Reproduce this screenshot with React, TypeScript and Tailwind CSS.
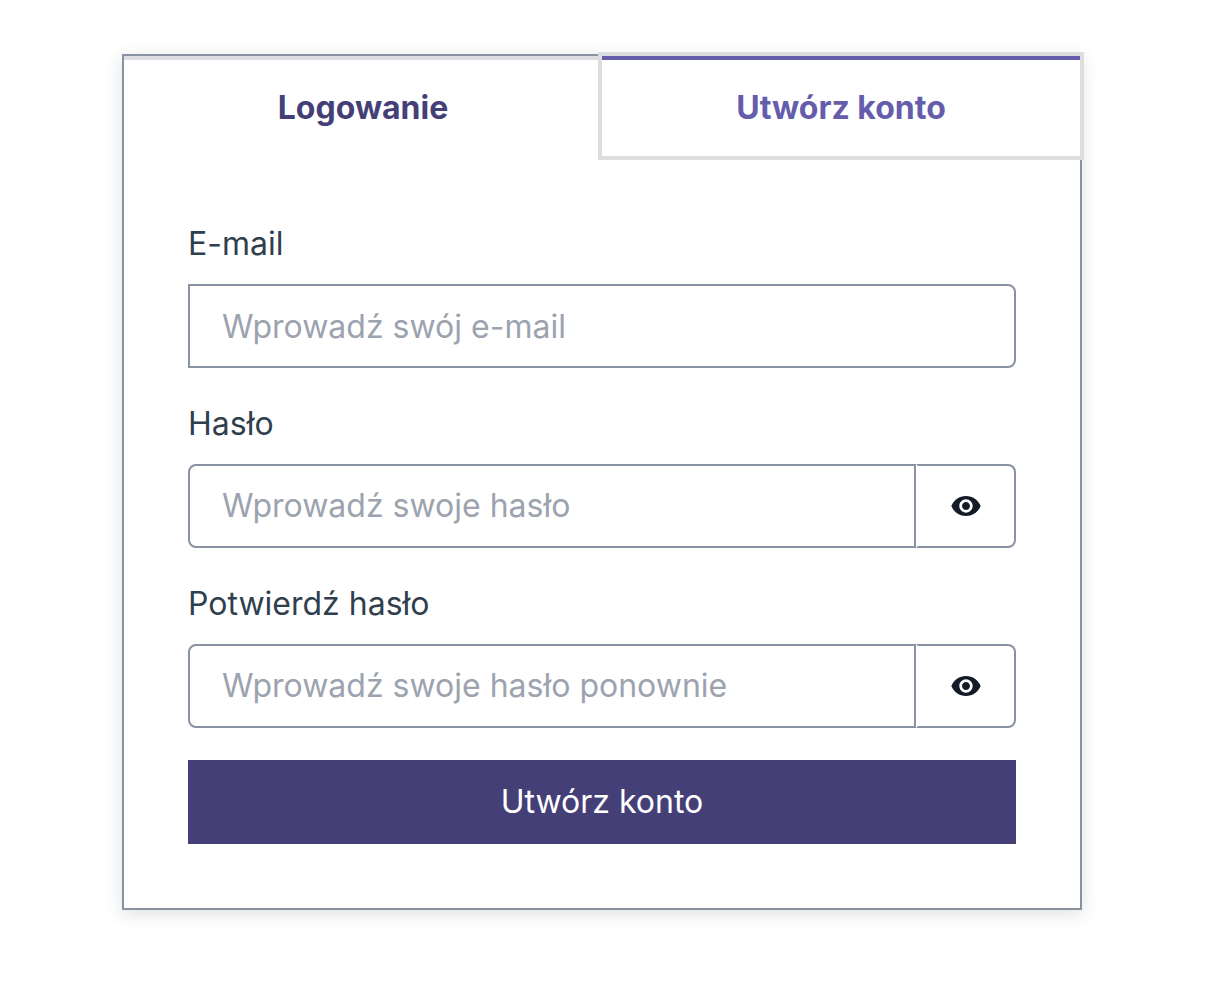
import { useState } from "react";

function Eye() {
  return (
    <svg viewBox="0 0 24 24" className="size-8" fill="currentColor" aria-hidden="true">
      <path d="M12 4.5C7 4.5 2.73 7.61 1 12c1.73 4.39 6 7.5 11 7.5s9.27-3.11 11-7.5c-1.73-4.39-6-7.5-11-7.5zM12 17c-2.76 0-5-2.24-5-5s2.24-5 5-5 5 2.24 5 5-2.24 5-5 5zm0-8c-1.66 0-3 1.34-3 3s1.34 3 3 3 3-1.34 3-3-1.34-3-3-3z" />
    </svg>
  );
}

type PasswordFieldProps = { id: string; label: string; placeholder: string };

function PasswordField({ id, label, placeholder }: PasswordFieldProps) {
  const [visible, setVisible] = useState(false);
  return (
    <div className="flex flex-col gap-4">
      <label htmlFor={id} className="leading-12">{label}</label>
      <div className="flex h-21">
        <input
          id={id}
          type={visible ? "text" : "password"}
          placeholder={placeholder}
          className="min-w-0 flex-1 rounded-l-lg border-2 border-[#8892a0] px-8 leading-12 placeholder:text-[#9ca3af]"
        />
        <button
          type="button"
          aria-label="Pokaż hasło"
          onClick={() => setVisible(!visible)}
          className="flex w-25 items-center justify-center rounded-r-lg border-2 border-[#8892a0] border-l-transparent text-[#111c27]"
        >
          <Eye />
        </button>
      </div>
    </div>
  );
}

export default function App() {
  return (
    <main className="min-h-screen bg-white px-[122px] pt-[54px] pr-[134px] pb-16 font-['Inter',sans-serif] text-[32px] text-[#2f3f4e]">
      <section className="border-2 border-[#8892a0] bg-white shadow-[0_4px_16px_rgba(47,61,76,0.16)]">
        <div role="tablist" className="-mt-1 -mr-1 flex h-27 font-bold">
          <button type="button" role="tab" aria-selected="false" className="mt-1 flex-1 border-t-4 border-[#dcdde0] pr-2 pb-1 text-[#453f78]">
            Logowanie
          </button>
          <button type="button" role="tab" aria-selected="true" className="-ml-3 flex flex-1 border-4 border-[#dcdddf] bg-white text-[#655dab]">
            <span className="flex h-full w-full items-center justify-center border-t-4 border-[#655dab]">Utwórz konto</span>
          </button>
        </div>
        <form className="flex flex-col gap-8 px-16 pt-15 pb-16">
          <div className="flex flex-col gap-4">
            <label htmlFor="email" className="leading-12">E-mail</label>
            <input
              id="email"
              type="email"
              placeholder="Wprowadź swój e-mail"
              className="h-21 rounded-r-lg border-2 border-[#8892a0] px-8 leading-12 placeholder:text-[#9ca3af]"
            />
          </div>
          <PasswordField id="password" label="Hasło" placeholder="Wprowadź swoje hasło" />
          <PasswordField id="confirm" label="Potwierdź hasło" placeholder="Wprowadź swoje hasło ponownie" />
          <button type="submit" className="h-21 bg-[#453f78] text-white">Utwórz konto</button>
        </form>
      </section>
    </main>
  );
}
